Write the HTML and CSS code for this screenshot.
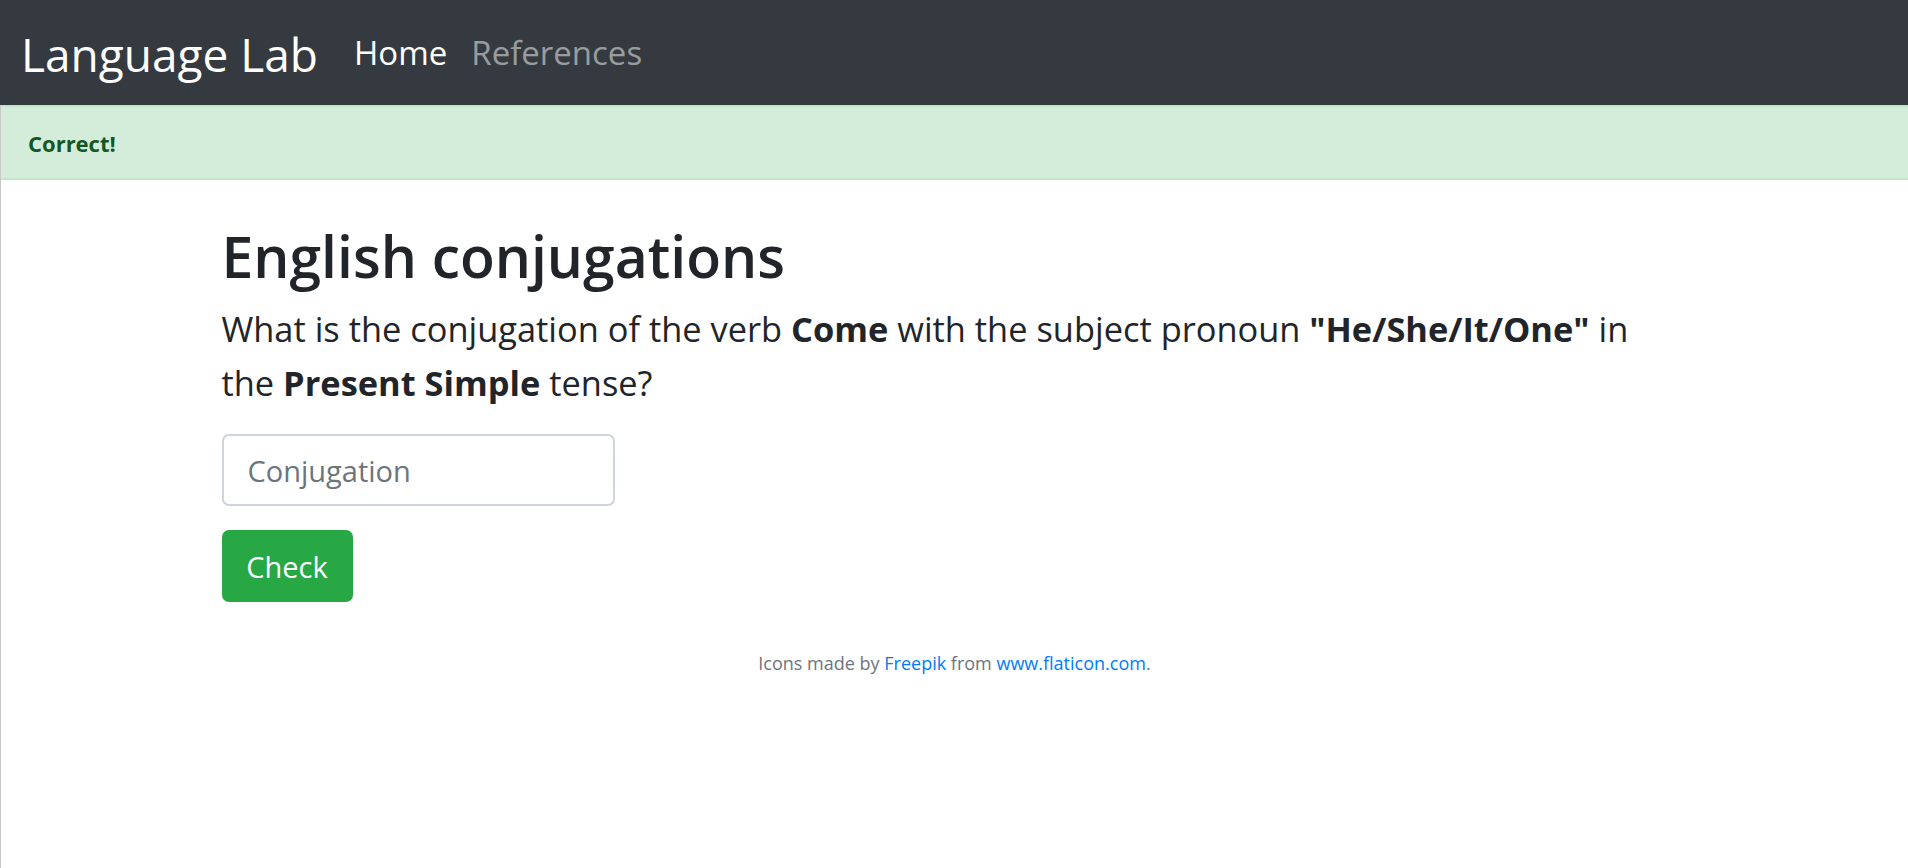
FILE: index.html
```html
<!DOCTYPE html>
<html lang="en">
<head>
<meta charset="utf-8">
<title>Language Lab</title>
<link rel="stylesheet" href="styles.css">
</head>
<body>
<nav class="navbar">
  <a class="brand" href="#">Language Lab</a>
  <ul class="nav">
    <li><a class="nav-link active" href="#">Home</a></li>
    <li><a class="nav-link" href="#">References</a></li>
  </ul>
</nav>
<div class="page">
  <div class="alert">Correct!</div>
  <main class="container">
    <h1 class="title">English conjugations</h1>
    <p class="question">What is the conjugation of the verb <strong>Come</strong> with the subject pronoun <strong>"He/She/It/One"</strong> in the <strong>Present Simple</strong> tense?</p>
    <form class="form">
      <input class="input" type="text" placeholder="Conjugation">
      <button class="btn" type="button">Check</button>
    </form>
  </main>
  <footer class="footer">Icons made by <a href="#">Freepik</a> from <a href="#">www.flaticon.com</a>.</footer>
</div>
</body>
</html>
```
FILE: styles.css
```css
* { box-sizing: border-box; }
html, body { margin: 0; padding: 0; }
body {
  font-family: "Open Sans", "Noto Sans", sans-serif;
  color: #212529;
  background: #fff;
  height: 868px;
  display: flex;
  flex-direction: column;
}
a { text-decoration: none; }

.navbar {
  height: 105px;
  background: #343a40;
  display: flex;
  align-items: center;
  padding: 0 24px 0 21px;
  flex-shrink: 0;
}
.brand {
  color: #fff;
  font-size: 46px;
  line-height: 1;
  margin-right: 24px;
  margin-top: 2px;
}
.nav {
  list-style: none;
  margin: 0;
  padding: 0;
  display: flex;
}
.nav-link {
  display: block;
  font-size: 33px;
  line-height: 1;
  padding: 0 12px;
  color: rgba(255,255,255,.5);
}
.nav-link.active { color: #fff; }

.page {
  flex: 1;
  border-left: 1px solid #c8c8c8;
}
.alert {
  height: 75px;
  background: #d4edda;
  border-top: 2px solid #c3e6cb;
  border-bottom: 2px solid #c3e6cb;
  color: #155724;
  font-weight: 700;
  font-size: 22px;
  display: flex;
  align-items: center;
  padding: 0 27px;
}
.container {
  width: 1466px;
  margin: 0 auto;
  padding-top: 42px;
}
.title {
  font-size: 57px;
  font-weight: 600;
  line-height: 1.2;
  margin: 0 0 12px 0;
}
.question {
  font-size: 34.4px;
  line-height: 54px;
  font-weight: 400;
  margin: 0 0 24px 0;
}
.question strong { font-weight: 700; }
.form {
  display: flex;
  flex-direction: column;
  align-items: flex-start;
  gap: 24px;
}
.input {
  width: 393px;
  height: 72px;
  border: 2px solid #ced4da;
  border-radius: 7px;
  padding: 12px 24px;
  font-family: inherit;
  font-size: 29px;
  color: #495057;
  background: #fff;
}
.input::placeholder { color: #6c757d; }
.btn {
  height: 72px;
  width: 131px;
  border: none;
  border-radius: 7px;
  background: #28a745;
  color: #fff;
  font-family: inherit;
  font-size: 29px;
  padding: 0;
  cursor: pointer;
}
.footer {
  text-align: center;
  font-size: 18px;
  color: #6c757d;
  margin-top: 49px;
}
.footer a { color: #007bff; }
```
